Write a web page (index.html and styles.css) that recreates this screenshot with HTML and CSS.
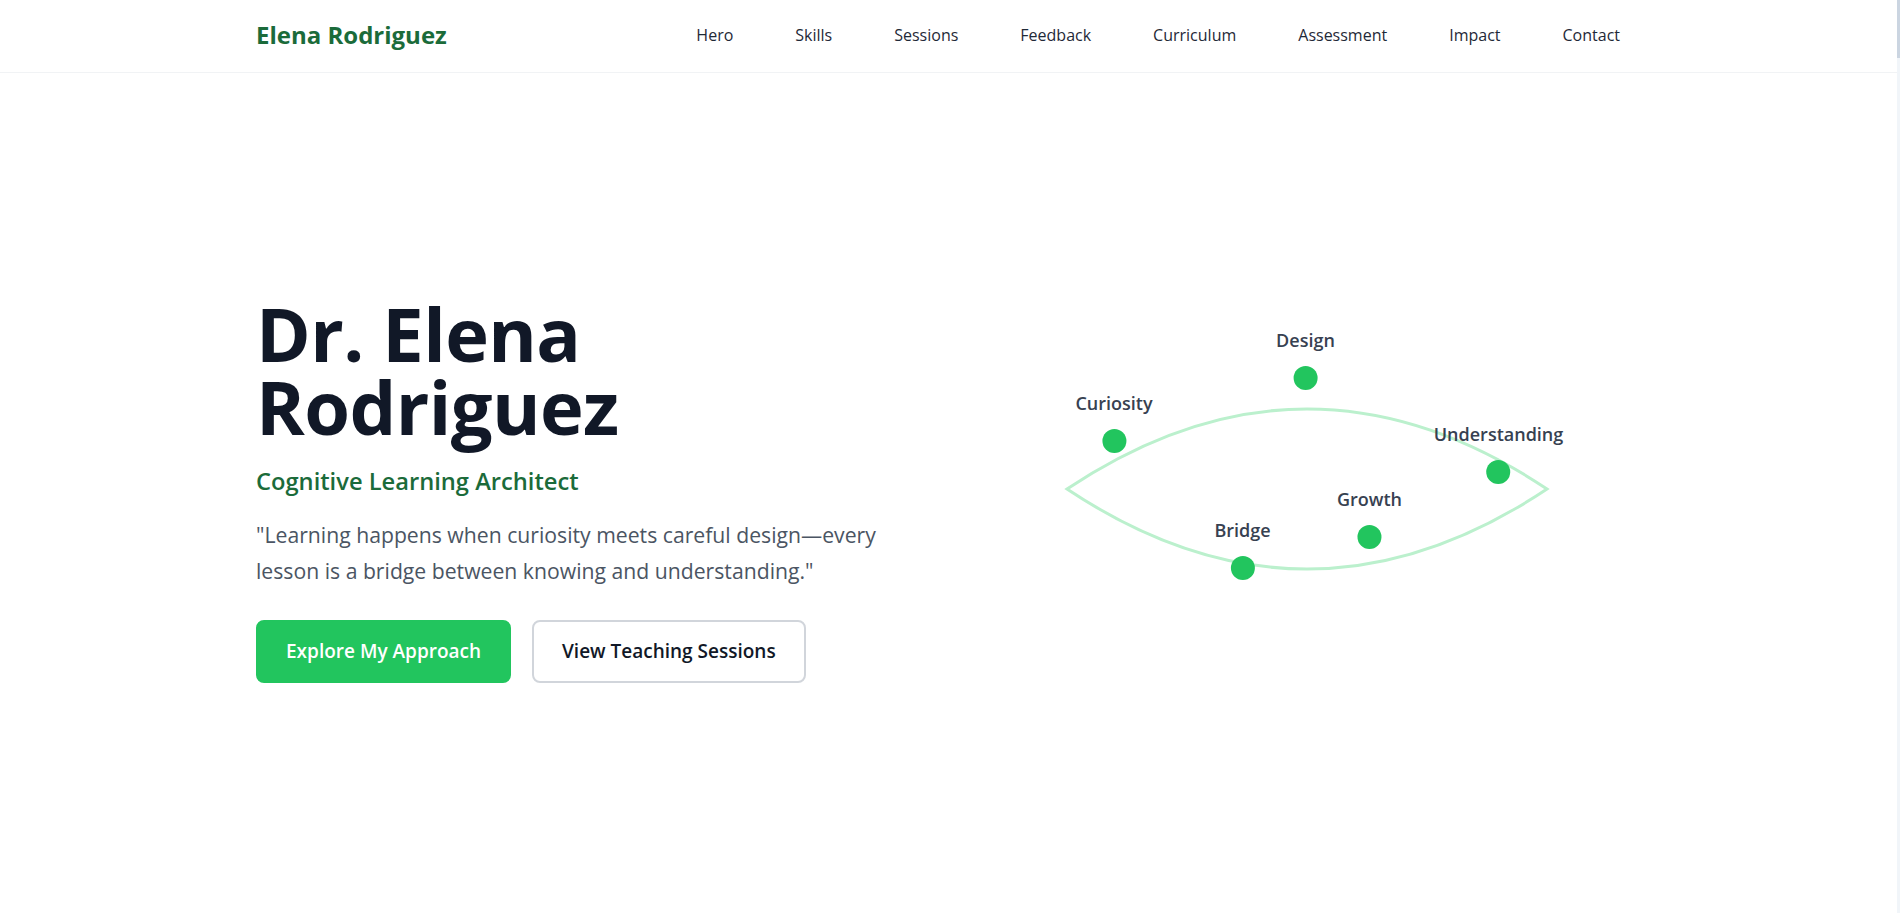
FILE: index.html
```html
<!DOCTYPE html>
<html lang="en">
<head>
<meta charset="utf-8">
<title>Elena Rodriguez</title>
<link rel="stylesheet" href="styles.css">
</head>
<body>
<header class="site-header">
  <div class="container header-inner">
    <a class="logo" href="#hero">Elena Rodriguez</a>
    <nav class="nav">
      <a href="#hero">Hero</a>
      <a href="#skills">Skills</a>
      <a href="#sessions">Sessions</a>
      <a href="#feedback">Feedback</a>
      <a href="#curriculum">Curriculum</a>
      <a href="#assessment">Assessment</a>
      <a href="#impact">Impact</a>
      <a href="#contact">Contact</a>
    </nav>
  </div>
</header>
<main>
  <section class="hero" id="hero">
    <div class="container hero-grid">
      <div class="hero-text">
        <h1 class="hero-title">Dr. Elena Rodriguez</h1>
        <p class="hero-role">Cognitive Learning Architect</p>
        <p class="hero-quote">"Learning happens when curiosity meets careful design—every lesson is a bridge between knowing and understanding."</p>
        <div class="hero-actions">
          <a class="btn btn-primary" href="#skills">Explore My Approach</a>
          <a class="btn btn-outline" href="#sessions">View Teaching Sessions</a>
        </div>
      </div>
      <div class="hero-visual">
        <div class="diagram">
          <svg class="lens" viewBox="0 0 480 320" width="480" height="320" aria-hidden="true">
            <path d="M0 160 Q240 0 480 160 Q240 320 0 160 Z" fill="none" stroke="#bbf0cd" stroke-width="3"/>
          </svg>
          <div class="node node-design"><span class="node-label">Design</span><span class="node-dot"></span></div>
          <div class="node node-curiosity"><span class="node-label">Curiosity</span><span class="node-dot"></span></div>
          <div class="node node-understanding"><span class="node-label">Understanding</span><span class="node-dot"></span></div>
          <div class="node node-growth"><span class="node-label">Growth</span><span class="node-dot"></span></div>
          <div class="node node-bridge"><span class="node-label">Bridge</span><span class="node-dot"></span></div>
        </div>
      </div>
    </div>
  </section>
</main>
<div class="scrollbar" aria-hidden="true"><div class="scrollbar-thumb"></div></div>
</body>
</html>
```

FILE: styles.css
```css
* { box-sizing: border-box; }

html { background: #ffffff; }

body {
  margin: 0;
  font-family: "Open Sans", "Noto Sans", "Liberation Sans", sans-serif;
  color: #111827;
  background: #ffffff;
}

a { text-decoration: none; color: inherit; }

.container {
  max-width: 1388px;
  margin: 0 auto;
}

.site-header {
  background: #ffffff;
  border-bottom: 1px solid #f1f3f5;
}

.header-inner {
  height: 72px;
  padding-bottom: 2px;
  display: flex;
  align-items: center;
  justify-content: space-between;
}

.logo {
  font-size: 24px;
  font-weight: 700;
  color: #1b6b3a;
  margin-bottom: 1px;
}

.nav {
  display: flex;
  gap: 62px;
  padding-right: 24px;
}

.nav a {
  font-size: 16px;
  color: #1f2937;
}

.hero {
  min-height: calc(100vh - 73px);
  padding-bottom: 6px;
  display: flex;
  align-items: center;
}

.hero-grid {
  width: 100%;
  display: grid;
  grid-template-columns: 1fr 1fr;
  gap: 48px;
  align-items: center;
}

.hero-title {
  margin: 0;
  font-size: 74px;
  line-height: 73px;
  font-weight: 700;
  color: #111827;
  letter-spacing: -0.6px;
}

.hero-role {
  margin: 22px 0 0;
  font-size: 23.7px;
  font-weight: 600;
  color: #1b6b3a;
}

.hero-quote {
  margin: 20px 0 0;
  max-width: 650px;
  font-size: 21.2px;
  line-height: 36px;
  color: #4b5563;
}

.hero-actions {
  margin-top: 31px;
  display: flex;
  gap: 21px;
}

.btn {
  display: inline-block;
  padding: 16px 28px;
  border: 2px solid transparent;
  border-radius: 8px;
  font-size: 19px;
  line-height: 27px;
  font-weight: 600;
}

.btn-primary {
  background: #22c55e;
  border-color: #22c55e;
  color: #ffffff;
}

.btn-outline {
  background: #ffffff;
  border-color: #d1d5db;
  color: #111827;
}

.hero-visual {
  display: flex;
  justify-content: center;
}

.diagram {
  position: relative;
  width: 480px;
  height: 320px;
  margin-right: 5px;
  margin-bottom: 3px;
}

.lens {
  display: block;
  overflow: visible;
}

.node {
  position: absolute;
  display: flex;
  flex-direction: column;
  align-items: center;
  transform: translate(-50%, -100%);
  margin-top: 12px;
}

.node-label {
  font-size: 18px;
  font-weight: 600;
  color: #374151;
  line-height: 24px;
  margin-bottom: 14px;
  white-space: nowrap;
}

.node-dot {
  width: 24px;
  height: 24px;
  border-radius: 50%;
  background: #22c55e;
}

.node-design { left: 239px; top: 49px; }
.node-curiosity { left: 47.5px; top: 112px; }
.node-understanding { left: 432px; top: 143px; }
.node-growth { left: 303px; top: 208px; }
.node-bridge { left: 176px; top: 239px; }

.scrollbar {
  position: fixed;
  top: 0;
  right: 0;
  width: 3px;
  height: 100vh;
  background: #f1f5f9;
}

.scrollbar-thumb {
  height: 58px;
  background: #cbd5e1;
}
```
